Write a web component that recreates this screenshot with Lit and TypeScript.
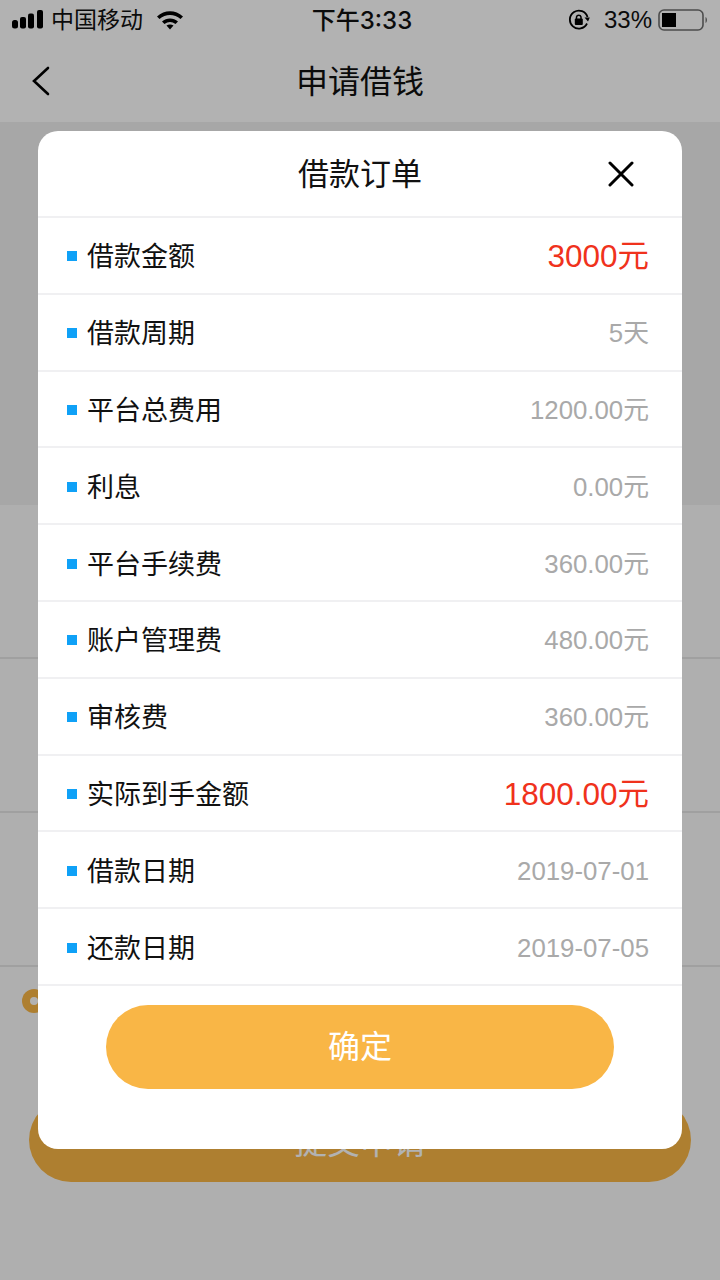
import { LitElement, html, css, svg } from "lit";
import { customElement } from "lit/decorators.js";

const rows: [string, string, string?][] = [
  ["借款金额", "3000元", "big"],
  ["借款周期", "5天"],
  ["平台总费用", "1200.00元"],
  ["利息", "0.00元"],
  ["平台手续费", "360.00元"],
  ["账户管理费", "480.00元"],
  ["审核费", "360.00元"],
  ["实际到手金额", "1800.00元", "big"],
  ["借款日期", "2019-07-01"],
  ["还款日期", "2019-07-05"],
];

@customElement("app-root")
export class AppRoot extends LitElement {
  static styles = css`
    :host {
      display: block;
      width: 720px;
      height: 1280px;
      position: relative;
      overflow: hidden;
      background: #fbfbfb;
      font-family: "Liberation Sans", "Noto Sans CJK SC", sans-serif;
      color: #000;
    }
    .status {
      height: 40px;
      display: flex;
      align-items: center;
      padding: 0 10px 0 12px;
      position: relative;
      font-size: 23px;
      color: #111;
      background: #fff;
      line-height: 28px;
    }
    .left { display: flex; align-items: center; gap: 8px; }
    .wifi { margin-left: 5px; }
    .time {
      position: absolute; left: 0; right: 0; text-align: center;
      font-family: Inter, "Noto Sans CJK SC", sans-serif;
      font-size: 24px; font-weight: 500;
      padding: 2px 0 0 4px;
    }
    .right { margin-left: auto; display: flex; align-items: center; }
    .pct { margin-left: 14px; margin-right: 6px; font-size: 24px; }
    .nav {
      height: 82px;
      box-sizing: border-box;
      padding-bottom: 4px;
      display: flex;
      align-items: center;
      justify-content: center;
      position: relative;
      font-size: 32px;
      background: #fff;
      color: #111;
    }
    .back { position: absolute; left: 31px; top: 26px; }
    .banner { height: 383px; background: #f0f0f0; }
    .formrow { height: 154px; box-sizing: border-box; border-bottom: 2px solid #e6e6e6; }
    .radio {
      position: absolute; left: 22px; top: 989px;
      width: 24px; height: 24px; border-radius: 50%;
      background: #f9b646;
    }
    .radio::after {
      content: ""; position: absolute; left: 8px; top: 8px;
      width: 8px; height: 8px; border-radius: 50%; background: #fff;
    }
    .submit {
      position: absolute; left: 29px; top: 1098px; width: 662px; height: 84px;
      border-radius: 42px; background: #f9b646; color: #fff;
      font-size: 33px; display: flex; align-items: center; justify-content: center;
    }
    .scrim { position: absolute; inset: 0; background: rgba(0, 0, 0, 0.3); }
    .modal {
      position: absolute; left: 38px; top: 131px; width: 644px; height: 1018px;
      background: #fff; border-radius: 20px; display: flex; flex-direction: column;
    }
    .head {
      height: 87px; flex: none; box-sizing: border-box; border-bottom: 2px solid #f0f0f2;
      display: flex; align-items: center; justify-content: center;
      font-size: 31px; position: relative; padding-bottom: 5px; color: #111;
    }
    .close { position: absolute; left: 570px; top: 30px; }
    .row {
      height: 76.8px; flex: none; box-sizing: border-box; border-bottom: 2px solid #f0f0f2;
      display: flex; align-items: center; padding: 0 33px 0 29px; font-size: 27px; color: #111;
      line-height: 36px;
    }
    .dot { width: 10px; height: 10px; background: #0fa1f7; margin: 2px 10px 0 0; flex: none; }
    .key { padding-top: 4px; }
    .val { margin-left: auto; color: #a9a9a9; font-size: 25.8px; padding-top: 2px; }
    .val.big { color: #f0321c; font-size: 31.5px; }
    .ok {
      margin: 19px 68px 0; height: 84px; border-radius: 42px; background: #f9b646;
      color: #fff; font-size: 32px; display: flex; align-items: center; justify-content: center;
      padding-bottom: 6px; box-sizing: border-box;
    }
  `;

  render() {
    return html`
      <div class="status">
        <div class="left">
          <svg width="31" height="20" viewBox="0 0 31 20">
            <rect x="0" y="10" width="6" height="8.500" rx="2.500" fill="#000"/>
            <rect x="8" y="7" width="6" height="11.500" rx="2" fill="#000"/>
            <rect x="16" y="3.500" width="6" height="15" rx="2" fill="#000"/>
            <rect x="25" y="0" width="6" height="18.500" rx="2" fill="#000"/>
          </svg>
          <span>中国移动</span>
          <svg class="wifi" width="28" height="20" viewBox="0 0 28 20">
            ${svg`<path d="M1 6.500C8.500 -0.500 19.500 -0.500 27 6.500L24.500 9C18.500 3.500 9.500 3.500 3.500 9Z" fill="#000"/>
            <path d="M6 11.500C10.500 7.500 17.500 7.500 22 11.500L19.500 14C16 11.300 12 11.300 8.500 14Z" fill="#000"/>
            <path d="M10.500 15.500C12.500 14 15.500 14 17.500 15.500L14 19.500Z" fill="#000"/>`}
          </svg>
        </div>
        <div class="time">下午3:33</div>
        <div class="right">
          <svg width="22" height="22" viewBox="0 0 22 22" fill="none">
            <path d="M19 14.500A9 9 0 1 1 19.500 8" stroke="#000" stroke-width="1.800"/>
            <path d="M16.500 8.500L21.800 8.500L20 12.500Z" fill="#000"/>
            <rect x="6.800" y="9.500" width="8" height="6.500" rx="1" fill="#000"/>
            <path d="M8.500 10V8A2.300 2.300 0 0 1 13 8V10" stroke="#000" stroke-width="1.500"/>
          </svg>
          <span class="pct">33%</span>
          <svg width="52" height="24" viewBox="0 0 52 24" fill="none">
            <rect x="1" y="2" width="44" height="20" rx="5" stroke="#6e6e6e" stroke-width="1.600"/>
            <rect x="4" y="5" width="14" height="14" fill="#000"/>
            <path d="M47.500 9C49.500 10 49.500 14 47.500 15Z" fill="#777"/>
          </svg>
        </div>
      </div>
      <div class="nav">
        <svg class="back" width="20" height="30" viewBox="0 0 20 30" fill="none">
          <path d="M17 2L3 15L17 28" stroke="#000" stroke-width="2.600" stroke-linecap="round"/>
        </svg>
        申请借钱
      </div>
      <div class="banner"></div>
      <div class="formrow"></div>
      <div class="formrow"></div>
      <div class="formrow"></div>
      <div class="radio"></div>
      <div class="submit">提交申请</div>
      <div class="scrim"></div>
      <div class="modal">
        <div class="head">
          借款订单
          <svg class="close" width="26" height="26" viewBox="0 0 26 26" fill="none">
            <path d="M2 2L24 24M24 2L2 24" stroke="#000" stroke-width="3" stroke-linecap="round"/>
          </svg>
        </div>
        ${rows.map(
          ([k, v, c]) => html`<div class="row">
            <span class="dot"></span><span class="key">${k}</span>
            <span class="val ${c ?? ""}">${v}</span>
          </div>`
        )}
        <div class="ok">确定</div>
      </div>
    `;
  }
}
